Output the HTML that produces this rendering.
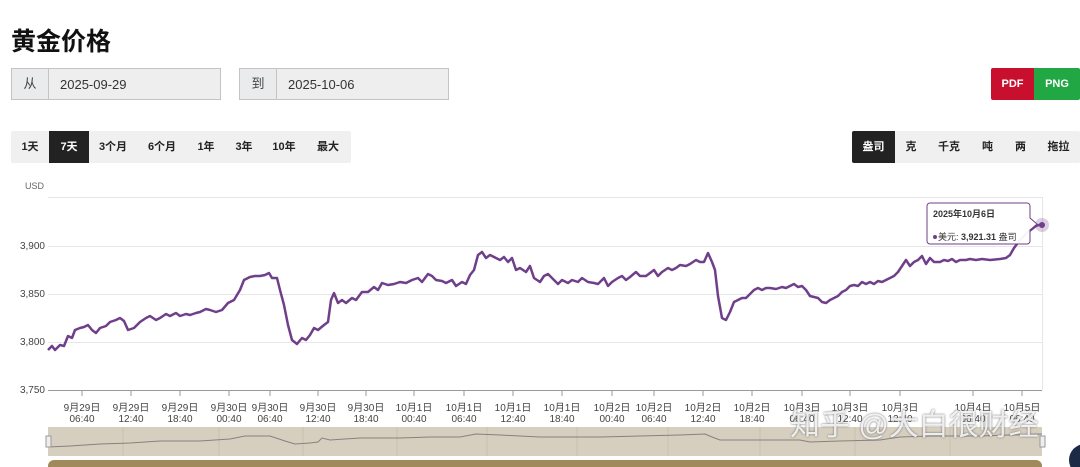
<!DOCTYPE html>
<html><head><meta charset="utf-8"><style>
*{margin:0;padding:0;box-sizing:border-box}
body{width:1080px;height:467px;overflow:hidden;background:#fff;font-family:"Liberation Sans","Noto Sans CJK SC",sans-serif;position:relative;color:#222}
.a{position:absolute}
h1{position:absolute;left:11px;top:22px;font-size:25px;font-weight:bold;color:#111}
.inp{position:absolute;top:68px;height:32px;border:1px solid #c4c4c4;background:#eeeeee;font-size:13px;display:flex;align-items:center}
.inp span{display:block}
.inp .l{width:37px;height:100%;border-right:1px solid #c4c4c4;text-align:center;line-height:30px;color:#444;background:#e9ebec}
.inp .v{padding-left:11px;color:#333}
.bar{position:absolute;top:131px;height:32px;background:#f0f0f0;display:flex;font-size:11px;font-weight:bold;border-radius:2px}
.bar div{height:32px;line-height:32px;text-align:center}
.on{background:#222;color:#fff}
.xl{position:absolute;top:403px;font-size:10px;color:#444;text-align:center;width:50px;line-height:11px}
</style></head><body>
<h1>黄金价格</h1>
<div class="inp" style="left:11px;width:210px"><span class="l">从</span><span class="v">2025-09-29</span></div>
<div class="inp" style="left:239px;width:210px"><span class="l">到</span><span class="v">2025-10-06</span></div>
<div class="a" style="left:991px;top:68px;width:43px;height:32px;background:#c8102e;color:#fff;font-size:11px;font-weight:bold;text-align:center;line-height:32px;border-radius:2px 0 0 2px">PDF</div>
<div class="a" style="left:1034px;top:68px;width:46px;height:32px;background:#22a745;color:#fff;font-size:11px;font-weight:bold;text-align:center;line-height:32px;border-radius:0 2px 2px 0">PNG</div>
<div class="bar" style="left:11px;width:340px">
<div style="width:38px">1天</div><div class="on" style="width:40px">7天</div><div style="width:48px">3个月</div><div style="width:50px">6个月</div><div style="width:38px">1年</div><div style="width:38px">3年</div><div style="width:42px">10年</div><div style="width:46px">最大</div></div>
<div class="bar" style="left:852px;width:228px">
<div class="on" style="width:43px;border-radius:2px 0 0 2px">盎司</div><div style="width:32px">克</div><div style="width:44px">千克</div><div style="width:33px">吨</div><div style="width:33px">两</div><div style="width:43px">拖拉</div></div>
<div class="a" style="left:25px;top:181px;font-size:9px;color:#666">USD</div>
<svg class="a" style="left:0;top:0" width="1080" height="467">
<g stroke="#e6e6e6" stroke-width="1">
<line x1="48" y1="197.5" x2="1042" y2="197.5"/><line x1="48" y1="246.5" x2="1042" y2="246.5"/><line x1="48" y1="294.5" x2="1042" y2="294.5"/><line x1="48" y1="342.5" x2="1042" y2="342.5"/>
<line x1="1042.5" y1="197" x2="1042.5" y2="390"/></g>
<line x1="48" y1="390.5" x2="1042" y2="390.5" stroke="#999"/>
<g font-size="10" fill="#444" text-anchor="end"><text x="45" y="249">3,900</text><text x="45" y="297">3,850</text><text x="45" y="345">3,800</text><text x="45" y="393">3,750</text></g>
<g stroke="#999"><path d="M82 391v5M131 391v5M180 391v5M229 391v5M270 391v5M318 391v5M366 391v5M414 391v5M464 391v5M513 391v5M562 391v5M612 391v5M654 391v5M703 391v5M752 391v5M802 391v5M850 391v5M900 391v5M973 391v5M1022 391v5"/></g>
<polyline fill="none" stroke="#6f3f8a" stroke-width="2.5" stroke-linejoin="round" points="48,350 52,346 55,350 60,345 64,346 68,336 72,338 75,330 80,328 84,327 88,325 92,330 96,333 100,328 106,326 110,322 116,320 120,318 124,321 128,330 134,328 140,322 146,318 150,316 156,320 160,318 166,314 170,316 176,313 180,316 186,314 190,315 196,313 200,312 206,309 210,310 216,312 222,310 228,303 234,300 240,290 244,280 250,277 255,276 260,276 265,275 269,273 272,278 277,278 280,290 284,305 288,325 292,340 297,344 302,338 306,340 310,335 314,328 318,330 324,325 328,322 331,300 334,293 338,303 342,300 346,303 352,298 356,300 362,292 368,292 374,287 378,290 382,283 388,285 394,284 400,282 406,283 412,280 418,278 422,282 428,274 432,276 436,280 442,281 446,283 452,280 456,286 462,282 466,284 470,275 474,270 478,255 482,252 486,258 490,255 496,258 500,260 504,257 508,262 512,258 516,270 520,268 526,272 530,266 534,278 540,282 544,276 548,274 554,280 558,284 562,280 568,283 572,280 578,282 582,278 588,282 594,283 598,284 604,278 608,286 612,282 618,278 622,276 626,280 630,277 636,272 640,276 646,276 650,273 654,270 658,276 662,272 668,268 672,270 676,268 680,265 686,266 690,264 696,260 700,262 704,262 708,253 712,262 715,270 718,296 722,318 726,320 730,312 734,302 738,300 742,298 746,298 750,294 754,290 758,288 762,290 766,288 770,288 776,289 782,287 786,288 790,286 794,284 798,287 802,286 806,290 810,296 814,297 818,298 822,302 826,303 830,300 834,298 838,296 842,292 846,290 850,286 854,285 858,286 862,282 866,284 870,282 874,284 878,281 882,282 886,280 890,278 894,276 898,272 902,266 906,260 910,266 914,262 918,260 922,256 926,264 930,258 934,262 940,262 944,260 948,261 952,259 956,262 960,260 966,260 970,259 976,260 982,259 990,260 1000,259 1006,258 1010,255 1014,248 1020,240 1028,232 1036,226 1042,224"/>
<circle cx="1042" cy="225" r="7" fill="#6f3f8a" fill-opacity="0.25"/><circle cx="1042" cy="225" r="3" fill="#6f3f8a"/>
<path d="M930 203h97a3 3 0 0 1 3 3v12l7 6-7 6v11a3 3 0 0 1-3 3h-97a3 3 0 0 1-3-3v-35a3 3 0 0 1 3-3z" fill="#fff" fill-opacity="0.95" stroke="#6f3f8a"/>
<text x="933" y="217" font-size="9" font-weight="bold" fill="#333">2025年10月6日</text>
<circle cx="935" cy="237" r="2" fill="#6f3f8a"/>
<text x="938" y="240" font-size="9" fill="#333">美元: <tspan font-weight="bold">3,921.31</tspan> 盎司</text>
<rect x="48" y="427" width="994" height="29" fill="#d6cfbf"/>
<g stroke="#c8c0ad"><path d="M123 427v29M219 427v29M303 427v29M397 427v29M487 427v29M577 427v29M668 427v29M760 427v29M855 427v29M950 427v29"/></g>
<polyline fill="none" stroke="#8a7f80" stroke-width="1" points="48,447 70,446 100,444 130,443 160,441 200,441 230,439 245,436 270,436 285,441 295,444 310,443 318,442 322,438 330,440 360,438 400,438 430,437 460,437 476,434 500,435 520,436 540,437 600,437 640,436 680,435 705,434 712,437 720,440 760,440 800,440 810,442 840,441 880,440 900,437 930,436 980,436 1042,434"/>
<rect x="46" y="436" width="5" height="11" fill="#eee" stroke="#999"/>
<rect x="1040" y="436" width="5" height="11" fill="#eee" stroke="#999"/>
<rect x="48" y="460" width="994" height="20" rx="6" fill="#a08a5c"/>
<circle cx="1085" cy="460" r="16" fill="#1c2a45"/>
</svg>
<div class="xl" style="left:57px">9月29日<br>06:40</div><div class="xl" style="left:106px">9月29日<br>12:40</div><div class="xl" style="left:155px">9月29日<br>18:40</div><div class="xl" style="left:204px">9月30日<br>00:40</div><div class="xl" style="left:245px">9月30日<br>06:40</div><div class="xl" style="left:293px">9月30日<br>12:40</div><div class="xl" style="left:341px">9月30日<br>18:40</div><div class="xl" style="left:389px">10月1日<br>00:40</div><div class="xl" style="left:439px">10月1日<br>06:40</div><div class="xl" style="left:488px">10月1日<br>12:40</div><div class="xl" style="left:537px">10月1日<br>18:40</div><div class="xl" style="left:587px">10月2日<br>00:40</div><div class="xl" style="left:629px">10月2日<br>06:40</div><div class="xl" style="left:678px">10月2日<br>12:40</div><div class="xl" style="left:727px">10月2日<br>18:40</div><div class="xl" style="left:777px">10月3日<br>06:40</div><div class="xl" style="left:825px">10月3日<br>12:40</div><div class="xl" style="left:875px">10月3日<br>12:40</div><div class="xl" style="left:948px">10月4日<br>06:40</div><div class="xl" style="left:997px">10月5日<br>06:40</div>
<div class="a" style="left:790px;top:400px;font-size:30px;color:rgba(255,255,255,0.85);text-shadow:0 0 2px #666;white-space:nowrap">知乎 @大白很财经</div>
</body></html>
